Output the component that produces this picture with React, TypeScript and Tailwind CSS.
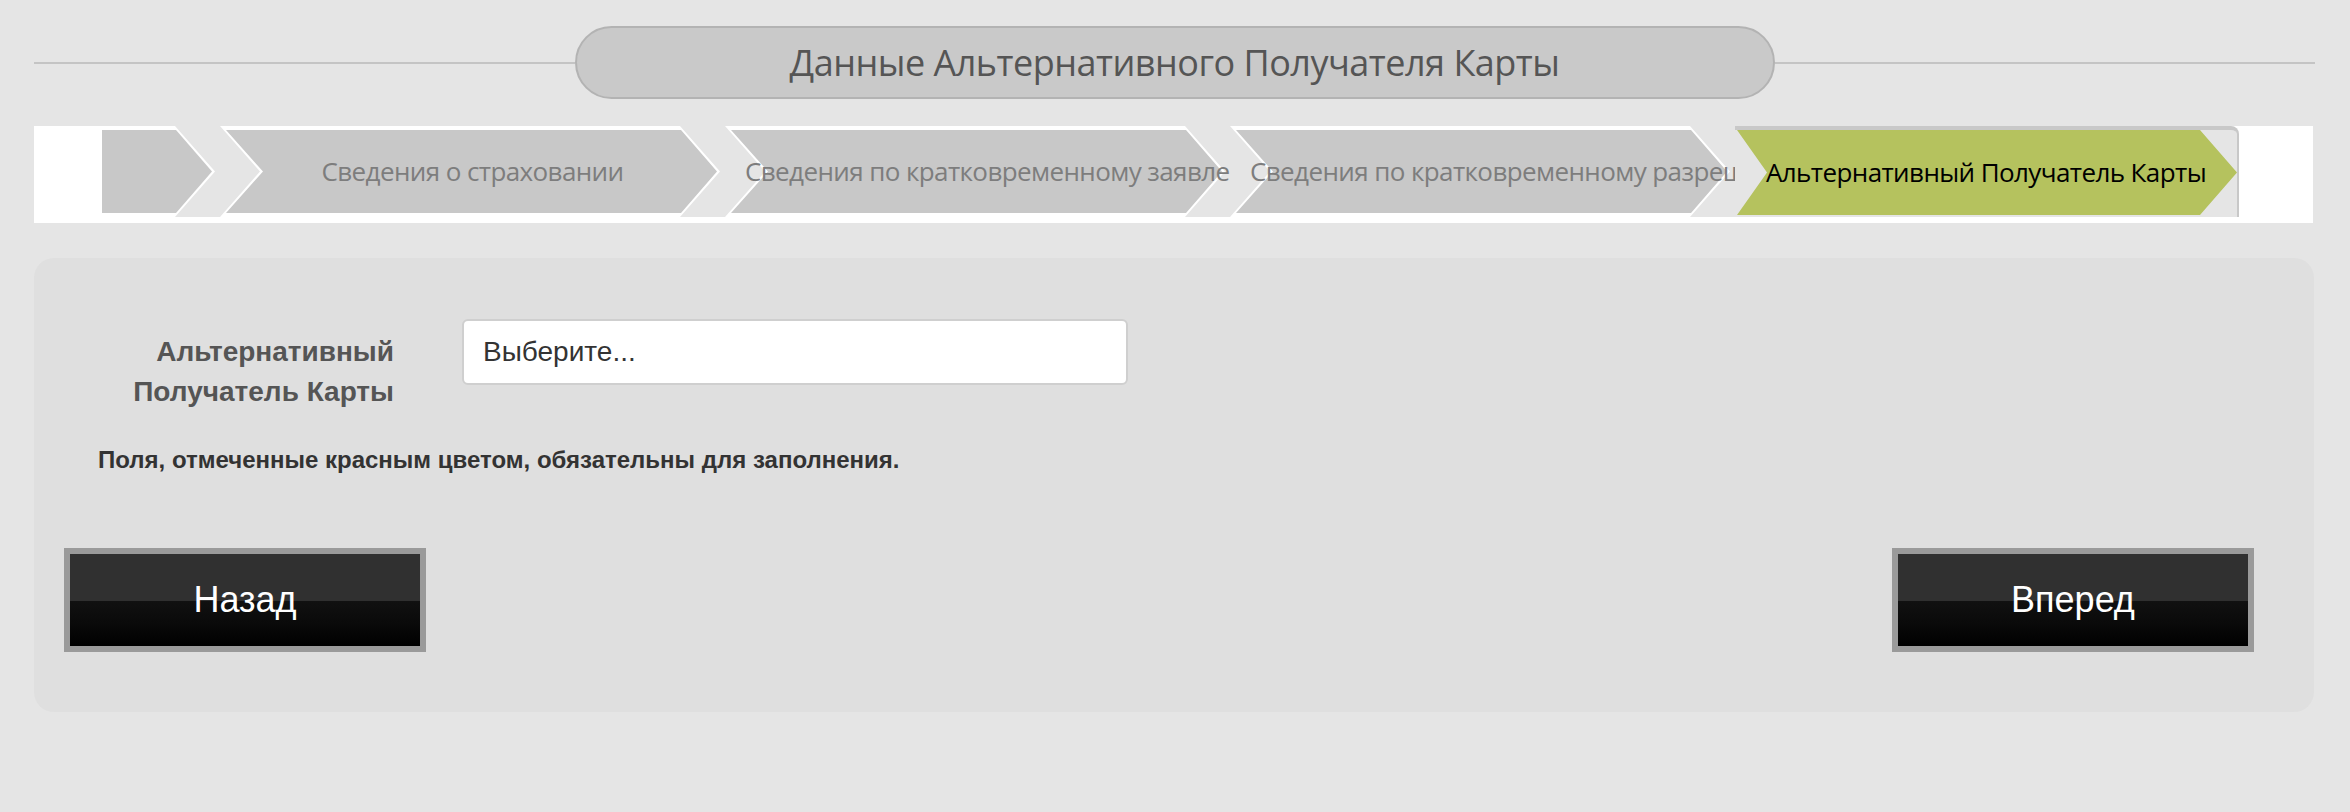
import React from "react";

const OUTER_MID =
  "absolute left-0 top-0 h-full w-[500px] bg-white [clip-path:polygon(0_0,calc(100%_-_40px)_0,100%_50%,calc(100%_-_40px)_100%,0_100%,40px_50%)]";
const INNER_MID =
  "absolute left-0 top-0 h-full w-[500px] bg-[#c8c8c8] [clip-path:polygon(6px_4px,calc(100%_-_39px)_4px,calc(100%_-_3px)_50%,calc(100%_-_39px)_calc(100%_-_4px),6px_calc(100%_-_4px),43px_50%)]";
const OUTER_FIRST =
  "absolute left-0 top-0 h-full w-[113px] bg-white [clip-path:polygon(0_0,calc(100%_-_40px)_0,100%_50%,calc(100%_-_40px)_100%,0_100%)]";
const INNER_FIRST =
  "absolute left-0 top-0 h-full w-[113px] bg-[#c8c8c8] [clip-path:polygon(0_4px,calc(100%_-_39px)_4px,calc(100%_-_3px)_50%,calc(100%_-_39px)_calc(100%_-_4px),0_calc(100%_-_4px))]";

const CRUMB_TEXT =
  "w-full whitespace-nowrap text-center font-['Open_Sans',sans-serif] text-[26px] tracking-[-0.6px] text-[#7d7d7d]";

function Crumb({ text }: { text: string }) {
  return (
    <div className="relative h-full w-[505px] shrink-0 overflow-hidden bg-[#e5e5e5]">
      <div className={OUTER_MID} />
      <div className={INNER_MID} />
      <div className="relative flex h-full items-center px-[20px]">
        <div className={CRUMB_TEXT}>{text}</div>
      </div>
    </div>
  );
}

function DarkButton({ label }: { label: string }) {
  return (
    <button className="h-[104px] w-[362px] border-[6px] border-[#9a9a9a] bg-[linear-gradient(to_bottom,#303030_0%,#303030_51%,#111111_51%,#0a0a0a_75%,#000000_100%)] font-['Liberation_Sans',Arial,sans-serif] text-[36px] text-white">
      {label}
    </button>
  );
}

export default function App() {
  return (
    <div className="min-h-screen w-full bg-[#e5e5e5]">
      <div className="ml-[34px] w-[2281px]">
        {/* Title */}
        <div className="flex items-center pt-[26px]">
          <div className="h-[2px] flex-1 bg-[#c4c4c4]" />
          <div className="flex h-[73px] w-[1200px] items-center justify-center rounded-full border-2 border-[#b3b3b3] bg-[#c9c9c9]">
            <span className="font-['Open_Sans',sans-serif] text-[36px] font-medium tracking-[-0.5px] text-[#555555]">
              Данные Альтернативного Получателя Карты
            </span>
          </div>
          <div className="h-[2px] flex-1 bg-[#c4c4c4]" />
        </div>

        {/* Breadcrumb strip */}
        <div className="mt-[27px] h-[97px] w-[2279px] bg-white pl-[68px]">
          <div className="flex h-[91px]">
            <div className="relative h-full w-[118px] shrink-0 overflow-hidden bg-[#e5e5e5]">
              <div className={OUTER_FIRST} />
              <div className={INNER_FIRST} />
            </div>
            <Crumb text="Сведения о страховании" />
            <Crumb text="Сведения по кратковременному заявлению" />
            <Crumb text="Сведения по кратковременному разрешению" />
            <div className="relative h-full w-[504px] shrink-0 overflow-hidden rounded-tr-[8px] border-t-4 border-r-2 border-[#c8c8c8] bg-[#e5e5e5] pb-[2px]">
              <div className="relative h-full w-full">
                <div className="absolute inset-0 bg-[#b5c25e] [clip-path:polygon(2px_0,calc(100%_-_37px)_0,100%_50%,calc(100%_-_37px)_100%,2px_100%,32px_50%)]" />
                <div className="relative flex h-full items-center px-[20px]">
                  <div className="w-full whitespace-nowrap text-center font-['Open_Sans',sans-serif] text-[26px] tracking-[-0.6px] text-black">
                    Альтернативный Получатель Карты
                  </div>
                </div>
              </div>
            </div>
          </div>
        </div>

        {/* Form panel */}
        <div className="mt-[35px] w-[2280px] rounded-[20px] bg-[#dfdfdf] px-[30px] pb-[60px] pt-[61px]">
          <div className="flex items-start">
            <label className="mt-[13px] w-[330px] text-right font-['Liberation_Sans',Arial,sans-serif] text-[28px] font-bold leading-[40px] text-[#555555]">
              Альтернативный
              <br />
              Получатель Карты
            </label>
            <div className="ml-[68px] flex h-[66px] w-[666px] items-center rounded-[6px] border-2 border-[#cfcfcf] bg-white pl-[19px] font-['Liberation_Sans',Arial,sans-serif] text-[28px] text-[#333333]">
              Выберите...
            </div>
          </div>

          <p className="ml-[34px] mt-[34px] font-['Liberation_Sans',Arial,sans-serif] text-[24px] font-bold leading-[28px] text-[#333333]">
            Поля, отмеченные красным цветом, обязательны для заполнения.
          </p>

          <div className="mr-[30px] mt-[74px] flex justify-between">
            <DarkButton label="Назад" />
            <DarkButton label="Вперед" />
          </div>
        </div>
      </div>
    </div>
  );
}
